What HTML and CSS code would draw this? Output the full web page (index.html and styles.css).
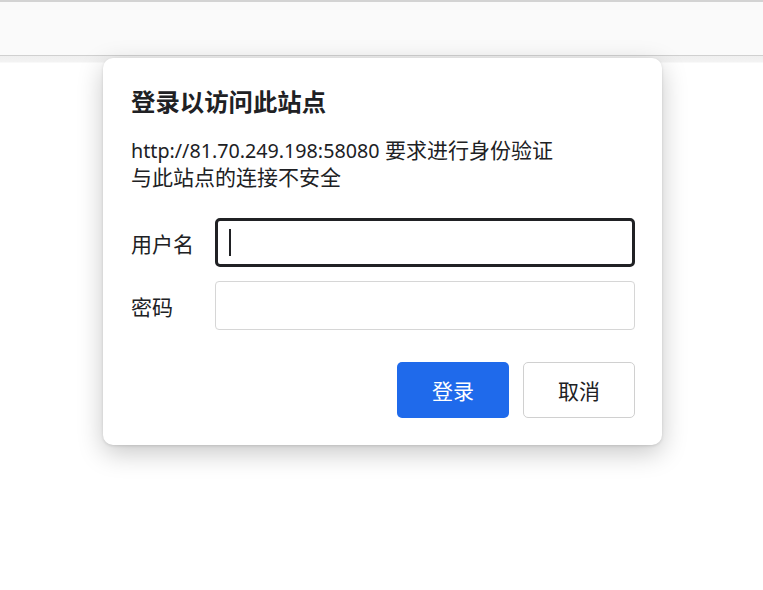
FILE: index.html
```html
<!DOCTYPE html>
<html lang="zh">
<head>
<meta charset="utf-8">
<link rel="stylesheet" href="styles.css">
</head>
<body>
<div class="toolbar"></div>
<div class="page">
  <div class="dialog">
    <h1 class="title">登录以访问此站点</h1>
    <p class="desc"><span class="url">http://81.70.249.198:58080</span> 要求进行身份验证<br>与此站点的连接不安全</p>
    <div class="form">
      <label class="label">用户名</label>
      <div class="input focused"><span class="caret"></span></div>
      <label class="label">密码</label>
      <div class="input"></div>
    </div>
    <div class="actions">
      <button class="btn primary">登录</button>
      <button class="btn secondary">取消</button>
    </div>
  </div>
</div>
</body>
</html>
```
FILE: styles.css
```css
html, body {
  margin: 0;
  padding: 0;
  background: #ffffff;
  font-family: "Noto Sans", "Noto Sans CJK SC", sans-serif;
  color: #202124;
}
.toolbar {
  height: 53px;
  background: #fafafa;
  border-top: 2px solid #d3d3d3;
  border-bottom: 1px solid #d0d0d0;
}
.page {
  position: relative;
  height: 534px;
  background: linear-gradient(#efefef 0, #f3f3f3 6px, #ffffff 7px);
}
.dialog {
  position: absolute;
  left: 103px;
  top: 2px;
  width: 559px;
  box-sizing: border-box;
  padding: 26px 27px 27px 28px;
  background: #fff;
  border-radius: 10px;
  box-shadow: 0 8px 26px rgba(0,0,0,0.22), 0 1px 3px rgba(0,0,0,0.12);
}
.title {
  margin: 0;
  font-size: 24.4px;
  line-height: 34px;
  font-weight: 700;
  font-family: "Noto Sans CJK SC", sans-serif;
}
.desc {
  margin: 19px 0 0;
  font-size: 21px;
  line-height: 27px;
  font-family: "Noto Sans", "Noto Sans CJK SC", sans-serif;
}
.url {
  font-size: 19.7px;
}
.form {
  margin-top: 27px;
  display: grid;
  grid-template-columns: 84px 1fr;
  row-gap: 14px;
  align-items: center;
}
.label {
  font-size: 21px;
  font-family: "Noto Sans CJK SC", sans-serif;
}
.input {
  height: 49px;
  box-sizing: border-box;
  border: 1px solid #d6d6d6;
  border-radius: 4px;
  display: flex;
  align-items: center;
  padding-left: 13px;
}
.input.focused {
  border: 3px solid #202124;
  border-radius: 5px;
  padding-left: 11px;
}
.caret {
  width: 2px;
  height: 27px;
  background: #202124;
}
.actions {
  margin-top: 32px;
  display: flex;
  justify-content: flex-end;
  gap: 14px;
}
.btn {
  width: 112px;
  height: 56px;
  border-radius: 5px;
  font-size: 21px;
  font-family: "Noto Sans CJK SC", sans-serif;
  cursor: pointer;
}
.primary {
  background: #1f6aeb;
  color: #fff;
  border: none;
}
.secondary {
  background: #fff;
  color: #202124;
  border: 1.5px solid #d0d0d0;
}
```
